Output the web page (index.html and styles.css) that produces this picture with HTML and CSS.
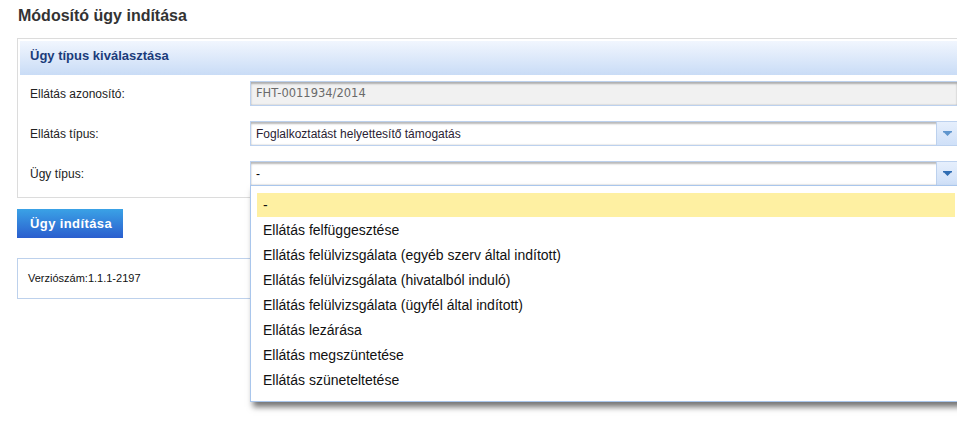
FILE: index.html
```html
<!DOCTYPE html>
<html lang="hu">
<head>
  <meta charset="UTF-8" />
  <meta name="viewport" content="width=device-width, initial-scale=1" />
  <title>Módosító ügy indítása</title>
  <link rel="stylesheet" href="styles.css">
</head>
<body>
  <h1 class="page-title">Módosító ügy indítása</h1>

  <div class="panel">
    <div class="panel-header">Ügy típus kiválasztása</div>
    <div class="panel-body">
      <div class="form-row">
        <label class="form-label">Ellátás azonosító:</label>
        <div class="field field-readonly">FHT-0011934/2014</div>
      </div>
      <div class="form-row">
        <label class="form-label">Ellátás típus:</label>
        <div class="field field-select">
          <span class="field-value">Foglalkoztatást helyettesítő támogatás</span>
          <span class="field-arrow">
            <svg width="9" height="6" viewBox="0 0 9 6"><path d="M0 0h9v1.5H8L4.5 5 1 1.5H0z" fill="#5f95cd"/></svg>
          </span>
        </div>
      </div>
      <div class="form-row">
        <label class="form-label">Ügy típus:</label>
        <div class="field field-select field-open">
          <span class="field-value">-</span>
          <span class="field-arrow">
            <svg width="9" height="6" viewBox="0 0 9 6"><path d="M0 0h9v1.5H8L4.5 5 1 1.5H0z" fill="#2f6db3"/></svg>
          </span>

          <ul class="dropdown-list">
            <li class="dropdown-item selected">-</li>
            <li class="dropdown-item">Ellátás felfüggesztése</li>
            <li class="dropdown-item">Ellátás felülvizsgálata (egyéb szerv által indított)</li>
            <li class="dropdown-item">Ellátás felülvizsgálata (hivatalból induló)</li>
            <li class="dropdown-item">Ellátás felülvizsgálata (ügyfél által indított)</li>
            <li class="dropdown-item">Ellátás lezárása</li>
            <li class="dropdown-item">Ellátás megszüntetése</li>
            <li class="dropdown-item">Ellátás szüneteltetése</li>
          </ul>
        </div>
      </div>
    </div>
  </div>

  <button class="start-btn">Ügy indítása</button>

  <div class="version-box">Verziószám:1.1.1-2197</div>
</body>
</html>
```

FILE: styles.css
```css
* {
  box-sizing: border-box;
}
html {
  overflow: hidden;
}
body {
  margin: 0;
  min-height: 446px;
  padding: 0 0 0 17px;
  background: #fff;
  color: #222;
  font-family: "Liberation Sans", Arial, sans-serif;
  font-size: 12px;
}

.page-title {
  margin: 0;
  padding: 6px 0 0 1px;
  height: 38px;
  font-size: 16px;
  line-height: 20px;
  font-weight: bold;
  color: #333;
}

/* ───── Panel ───── */
.panel {
  width: 960px;
  border: 1px solid #dcdcdc;
  padding: 2px 2px 0;
}
.panel-header {
  height: 34px;
  line-height: 30px;
  padding-left: 10px;
  font-size: 13px;
  font-weight: bold;
  color: #1b3c7a;
  background: linear-gradient(#f1f6fe, #c9dcf6);
}
.panel-body {
  padding: 6px 0 11px 10px;
}
.form-row {
  display: flex;
  align-items: center;
  height: 25px;
  margin-bottom: 15px;
}
.form-row:last-child {
  margin-bottom: 0;
}
.form-label {
  width: 220px;
  flex: none;
}

/* ───── Fields ───── */
.field {
  width: 708px;
  height: 25px;
  border: 1px solid #bcd1ee;
  background: #fff;
  box-shadow: inset 0 2px 2px rgba(0, 0, 0, 0.28), inset 0 -1px 1px rgba(0, 0, 0, 0.08);
}
.field-readonly {
  background: #f1f1f1;
  padding-left: 5px;
  line-height: 23px;
  font-family: "DejaVu Sans", Verdana, sans-serif;
  font-size: 11.5px;
  color: #6a6a6a;
}
.field-select {
  position: relative;
  display: flex;
}
.field-value {
  flex: 1;
  padding-left: 5px;
  line-height: 24px;
  color: #2a2233;
}
.field-arrow {
  width: 21px;
  flex: none;
  display: flex;
  align-items: center;
  justify-content: center;
  border-left: 1px solid #bcd1ee;
  background: linear-gradient(#e6effc, #cfe0f8);
}
.field-open .field-value {
  color: #000;
}

/* ───── Dropdown ───── */
.dropdown-list {
  position: absolute;
  top: 100%;
  left: -1px;
  width: 712px;
  margin: 0;
  padding: 7px 6px 8px 6px;
  list-style: none;
  background: #fff;
  border: 1px solid #a9c6ec;
  box-shadow: 3px 5px 6px rgba(0, 0, 0, 0.55);
  z-index: 10;
}
.dropdown-item {
  height: 25px;
  line-height: 25px;
  padding-left: 6px;
  font-size: 14px;
  color: #111;
}
.dropdown-item.selected {
  height: 24px;
  margin-bottom: 1px;
  line-height: 24px;
  background: #fef0a2;
}

/* ───── Button ───── */
.start-btn {
  display: block;
  margin-top: 11px;
  width: 106px;
  height: 29px;
  padding: 0 0 0 13px;
  border: none;
  text-align: left;
  font-family: "Liberation Sans", Arial, sans-serif;
  font-size: 13px;
  font-weight: bold;
  letter-spacing: 0.4px;
  color: #fff;
  background: linear-gradient(#3aa2e6, #2b5ece);
  cursor: pointer;
}

/* ───── Version ───── */
.version-box {
  margin-top: 20px;
  width: 960px;
  height: 41px;
  border: 1px solid #bdd1ec;
  padding-left: 10px;
  line-height: 39px;
  font-size: 11px;
  color: #111;
}
```
